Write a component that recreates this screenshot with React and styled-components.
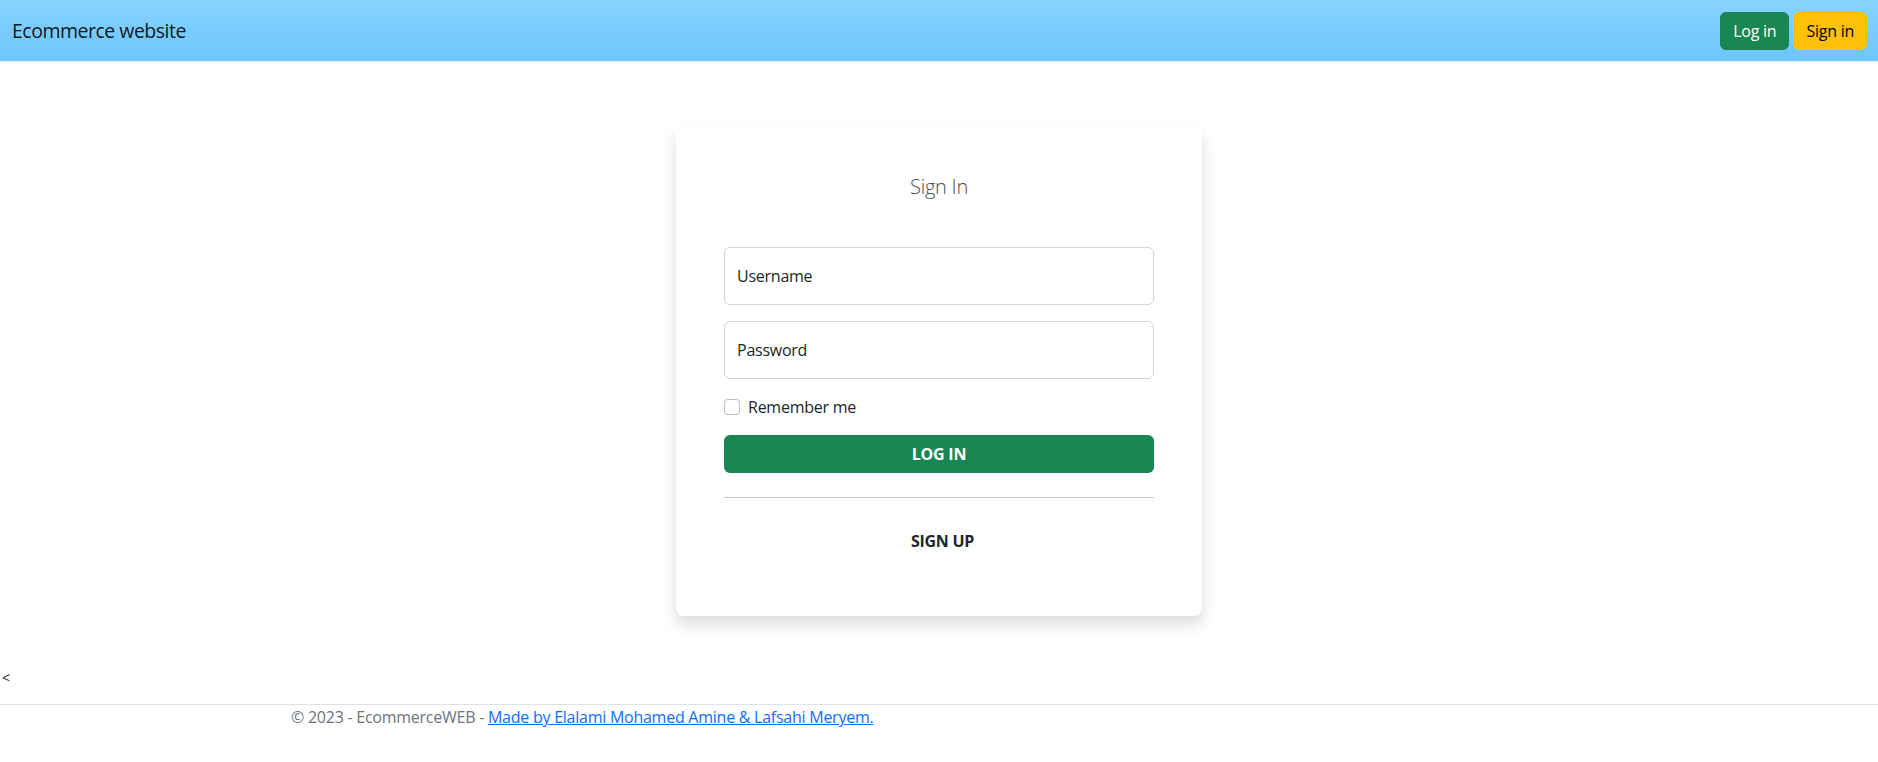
import React from "react";
import styled, { createGlobalStyle } from "styled-components";

const Global = createGlobalStyle`
  * { box-sizing: border-box; }
  html, body { margin: 0; padding: 0; background: #fff; }
  body {
    font-family: "Open Sans", "Noto Sans", "Liberation Sans", sans-serif;
    font-size: 16px;
    line-height: 1.5;
    color: #212529;
    letter-spacing: -0.25px;
  }
`;

const Navbar = styled.nav`
  height: 62px;
  display: flex;
  align-items: center;
  justify-content: space-between;
  padding: 0 11px 0 12px;
  background: linear-gradient(180deg, #87d3ff 0%, #6dc5fd 100%);
  border-bottom: 1px solid #e3eef6;
`;

const Brand = styled.a`
  font-size: 19.5px;
  line-height: 30px;
  letter-spacing: -0.5px;
  color: rgba(0, 0, 0, 0.9);
  text-decoration: none;
`;

const NavActions = styled.div`
  display: flex;
  gap: 4px;
`;

const NavButton = styled.button`
  height: 38px;
  padding: 0 12px;
  border: 1px solid ${(p) => p.$bg};
  border-radius: 6px;
  background: ${(p) => p.$bg};
  color: ${(p) => p.$fg};
  font: inherit;
  font-size: 16px;
  letter-spacing: inherit;
  cursor: pointer;
`;

const Main = styled.main`
  display: flex;
  justify-content: center;
  padding-top: 65px;
`;

const Card = styled.div`
  width: 526px;
  background: #fff;
  border-radius: 8px;
  box-shadow: 0 8px 16px rgba(0, 0, 0, 0.15);
  padding: 48px;
  display: flex;
  flex-direction: column;
`;

const Title = styled.h5`
  margin: 0 0 48px;
  font-size: 20px;
  line-height: 24px;
  font-weight: 300;
  text-align: center;
  color: #4a4f57;
`;

const Input = styled.input`
  display: block;
  width: 100%;
  height: 58px;
  margin-bottom: 16px;
  padding: 0 12px;
  border: 1px solid #ced4da;
  border-radius: 6px;
  font: inherit;
  font-size: 16px;
  letter-spacing: inherit;
  color: #212529;
  background: #fff;
  &::placeholder {
    color: #212529;
    opacity: 1;
  }
`;

const CheckRow = styled.label`
  display: flex;
  align-items: center;
  gap: 8px;
  height: 24px;
  margin-bottom: 16px;
  font-size: 16px;
`;

const CheckBox = styled.span`
  width: 16px;
  height: 16px;
  border: 1px solid rgba(0, 0, 0, 0.25);
  border-radius: 4px;
  background: #fff;
`;

const PrimaryButton = styled.button`
  width: 100%;
  height: 38px;
  border: none;
  border-radius: 6px;
  background: #198754;
  color: #fff;
  font: inherit;
  font-weight: 700;
  font-size: 16px;
  letter-spacing: inherit;
  text-transform: uppercase;
  cursor: pointer;
`;

const Divider = styled.hr`
  margin: 24px 0;
  border: 0;
  border-top: 1px solid #c8c9ca;
`;

const LinkButton = styled.button`
  align-self: center;
  height: 38px;
  margin-left: 7px;
  margin-bottom: 8px;
  padding: 0 12px;
  border: none;
  background: transparent;
  color: #212529;
  font: inherit;
  font-weight: 700;
  font-size: 16px;
  letter-spacing: inherit;
  text-transform: uppercase;
`;

const Stray = styled.div`
  margin-top: 50px;
  padding-left: 2px;
  font-size: 14px;
  line-height: 24px;
`;

const Footer = styled.footer`
  margin-top: 14px;
  border-top: 1px solid #dee2e6;
`;

const FooterInner = styled.div`
  max-width: 1320px;
  margin: 0 auto;
  padding: 0 12px;
  color: #6c757d;
  font-size: 16px;
  line-height: 24px;
  white-space: nowrap;
`;

const FooterLink = styled.a`
  color: #0d6efd;
  text-decoration: underline;
`;

export default function App() {
  return (
    <>
      <Global />
      <Navbar>
        <Brand href="#">Ecommerce website</Brand>
        <NavActions>
          <NavButton $bg="#198754" $fg="#fff">Log in</NavButton>
          <NavButton $bg="#ffc107" $fg="#000">Sign in</NavButton>
        </NavActions>
      </Navbar>
      <Main>
        <Card>
          <Title>Sign In</Title>
          <Input placeholder="Username" />
          <Input placeholder="Password" type="password" />
          <CheckRow>
            <CheckBox />
            Remember me
          </CheckRow>
          <PrimaryButton>Log in</PrimaryButton>
          <Divider />
          <LinkButton>Sign up</LinkButton>
        </Card>
      </Main>
      <Stray>&lt;</Stray>
      <Footer>
        <FooterInner>
          © 2023 - EcommerceWEB - <FooterLink href="#">Made by Elalami Mohamed Amine &amp; Lafsahi Meryem.</FooterLink>
        </FooterInner>
      </Footer>
    </>
  );
}
